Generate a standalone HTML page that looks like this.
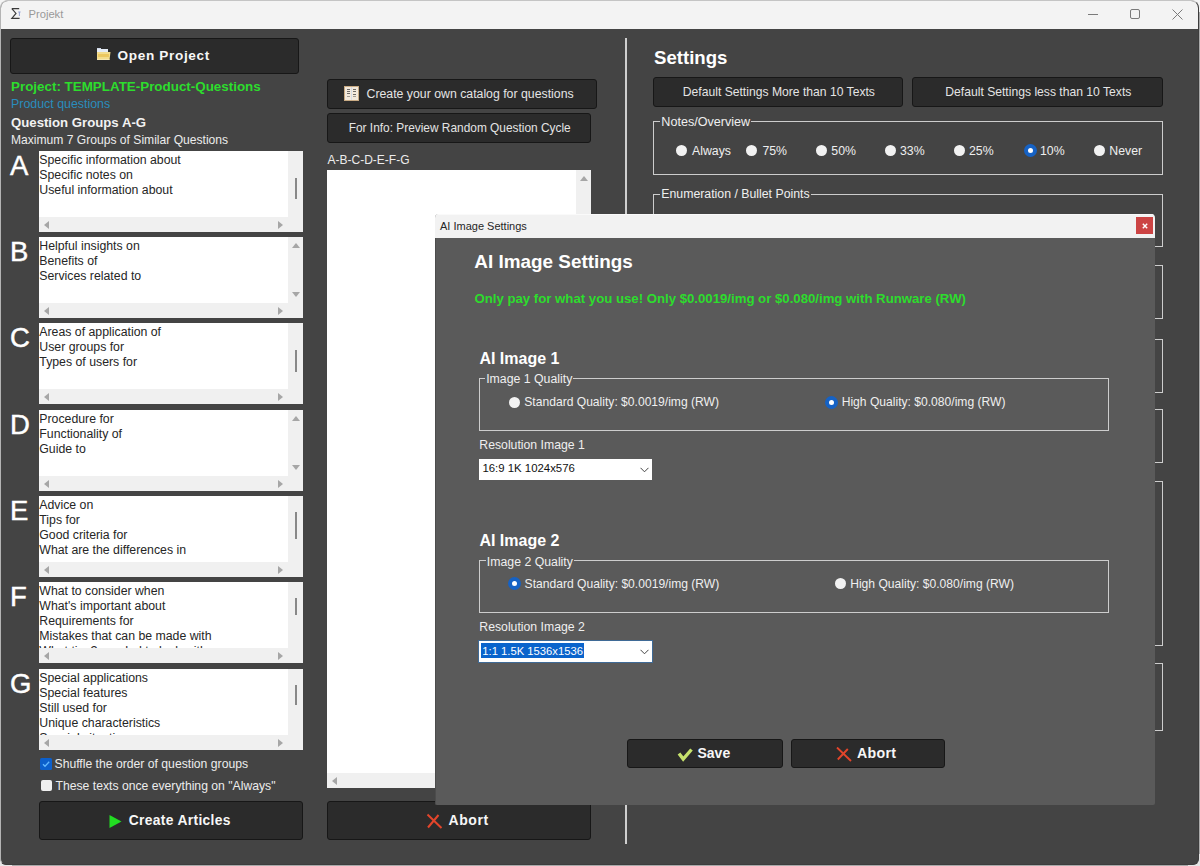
<!DOCTYPE html>
<html><head><meta charset="utf-8"><title>Projekt</title>
<style>
*{margin:0;padding:0;box-sizing:border-box}
html,body{width:1200px;height:866px;overflow:hidden;background:#aaaaaa;font-family:"Liberation Sans",sans-serif}
.a{position:absolute}
.l{position:absolute;white-space:nowrap}
.btn{position:absolute;background:#2b2b2b;border:1px solid #171717;border-radius:3px}
.gb{position:absolute;border:1px solid #cdcdcd}
.tb{position:absolute;left:39px;width:264px;height:81px;background:#fff;overflow:hidden}
.tb .t{position:absolute;left:0.3px;top:0;width:249px;height:66px;overflow:hidden;font-size:12.3px;line-height:15px;color:#262626;white-space:nowrap;padding-top:1.8px}
.tb .vs{position:absolute;left:249px;top:0;width:15px;height:66px;background:#f0f0f0}
.tb .hs{position:absolute;left:0;top:66px;width:264px;height:15px;background:#f0f0f0}
.big{position:absolute;color:#fff;font-size:26px;line-height:30px;white-space:nowrap}
</style></head><body>

<div class="a" style="left:0px;top:0px;width:12px;height:12px;background:#f4f4f4;"></div>
<div class="a" style="left:1188px;top:0px;width:12px;height:12px;background:#f4f4f4;"></div>
<div class="a" style="left:1188px;top:854px;width:12px;height:12px;background:#e6e6e6;"></div>
<div class="a" style="left:0px;top:854px;width:12px;height:12px;background:#e6e6e6;"></div>
<div class="a" style="left:0;top:0;width:1199px;height:865px;border-radius:8px 8px 6px 6px;background:#444444;border-left:1px solid #b4b4b4;border-top:1px solid #c4c4c4;border-right:1px solid #3d3d3d;border-bottom:1px solid #3d3d3d;overflow:hidden"><div class="a" style="left:0;top:0;width:1198px;height:28px;background:#f3f3f3"></div></div>
<svg class="a" style="left:10px;top:7px" width="12" height="13" viewBox="0 0 12 13"><path d="M1.8 1.6H9.2M1.8 1.6L6 6.4L1.8 11.4H9.6" fill="none" stroke="#3a3a3a" stroke-width="1.15"/><path d="M8.2 5H10.6M9.4 5V9" fill="none" stroke="#8c9ad0" stroke-width="0.9"/></svg>
<div class="l" style="left:28.5px;top:8.18px;font-size:11.2px;line-height:12.88px;color:#999999;">Projekt</div>
<div class="a" style="left:1088px;top:14px;width:10px;height:1px;background:#7a7a7a;"></div>
<div class="a" style="left:1130px;top:9px;width:10px;height:10px;border:1px solid #7a7a7a;border-radius:2px"></div>
<svg class="a" style="left:1172px;top:9px" width="11" height="11" viewBox="0 0 11 11"><path d="M0.5 0.5L10.5 10.5M10.5 0.5L0.5 10.5" stroke="#7a7a7a" stroke-width="1"/></svg>
<div class="btn" style="left:10px;top:38px;width:289px;height:36px"></div>
<svg class="a" style="left:97px;top:48px" width="14" height="13" viewBox="0 0 14 13"><rect x="0" y="0" width="4" height="1" fill="#cfd8e8"/><rect x="0" y="1" width="11" height="3" fill="#e4ebf5"/><path d="M0 4H13.5L12.5 12H0Z" fill="#f3dc8c"/><rect x="1" y="6" width="11" height="3" fill="#e9c255" opacity="0.8"/><rect x="0" y="11" width="12.5" height="1" fill="#f6e7b0"/></svg>
<div class="l" style="left:117.5px;top:48.47px;font-size:13.6px;line-height:15.64px;color:#f7f7f7;font-weight:bold;letter-spacing:0.65px;">Open Project</div>
<div class="l" style="left:11px;top:78.65px;font-size:13.4px;line-height:15.41px;color:#2ddd2d;font-weight:bold;">Project: TEMPLATE-Product-Questions</div>
<div class="l" style="left:11px;top:96.87px;font-size:12.4px;line-height:14.26px;color:#2a8dbd;">Product questions</div>
<div class="l" style="left:11px;top:114.84px;font-size:13.2px;line-height:15.18px;color:#f2f2f2;font-weight:bold;">Question Groups A-G</div>
<div class="l" style="left:11px;top:134.05px;font-size:12.1px;line-height:13.91px;color:#ececec;">Maximum 7 Groups of Similar Questions</div>
<div class="tb" style="top:151px"><div class="t">Specific information about<br>Specific notes on<br>Useful information about</div><div class="vs"></div><div class="hs"></div></div>
<div class="a" style="left:295px;top:178px;width:2px;height:21px;background:#888888;"></div>
<svg class="a" style="left:44px;top:221px" width="5" height="8" viewBox="0 0 5 8"><polygon points="5,0 0,4.0 5,8" fill="#a6a6a6"/></svg>
<svg class="a" style="left:278px;top:221px" width="5" height="8" viewBox="0 0 5 8"><polygon points="0,0 5,4.0 0,8" fill="#a6a6a6"/></svg>
<div class="l" style="left:10px;top:150.46px;font-size:27.5px;line-height:31.62px;color:#ffffff;-webkit-text-stroke:0.45px #fff;">A</div>
<div class="tb" style="top:237px"><div class="t">Helpful insights on<br>Benefits of<br>Services related to</div><div class="vs"></div><div class="hs"></div></div>
<svg class="a" style="left:292px;top:243px" width="8" height="5" viewBox="0 0 8 5"><polygon points="0,5 4.0,0 8,5" fill="#a6a6a6"/></svg>
<svg class="a" style="left:292px;top:292px" width="8" height="5" viewBox="0 0 8 5"><polygon points="0,0 8,0 4.0,5" fill="#a6a6a6"/></svg>
<svg class="a" style="left:44px;top:307px" width="5" height="8" viewBox="0 0 5 8"><polygon points="5,0 0,4.0 5,8" fill="#a6a6a6"/></svg>
<svg class="a" style="left:278px;top:307px" width="5" height="8" viewBox="0 0 5 8"><polygon points="0,0 5,4.0 0,8" fill="#a6a6a6"/></svg>
<div class="l" style="left:10px;top:236.46px;font-size:27.5px;line-height:31.62px;color:#ffffff;-webkit-text-stroke:0.45px #fff;">B</div>
<div class="tb" style="top:323px"><div class="t">Areas of application of<br>User groups for<br>Types of users for</div><div class="vs"></div><div class="hs"></div></div>
<div class="a" style="left:295px;top:350px;width:2px;height:22px;background:#888888;"></div>
<svg class="a" style="left:44px;top:393px" width="5" height="8" viewBox="0 0 5 8"><polygon points="5,0 0,4.0 5,8" fill="#a6a6a6"/></svg>
<svg class="a" style="left:278px;top:393px" width="5" height="8" viewBox="0 0 5 8"><polygon points="0,0 5,4.0 0,8" fill="#a6a6a6"/></svg>
<div class="l" style="left:10px;top:322.46px;font-size:27.5px;line-height:31.62px;color:#ffffff;-webkit-text-stroke:0.45px #fff;">C</div>
<div class="tb" style="top:410px"><div class="t">Procedure for<br>Functionality of<br>Guide to</div><div class="vs"></div><div class="hs"></div></div>
<svg class="a" style="left:292px;top:416px" width="8" height="5" viewBox="0 0 8 5"><polygon points="0,5 4.0,0 8,5" fill="#a6a6a6"/></svg>
<svg class="a" style="left:292px;top:465px" width="8" height="5" viewBox="0 0 8 5"><polygon points="0,0 8,0 4.0,5" fill="#a6a6a6"/></svg>
<svg class="a" style="left:44px;top:480px" width="5" height="8" viewBox="0 0 5 8"><polygon points="5,0 0,4.0 5,8" fill="#a6a6a6"/></svg>
<svg class="a" style="left:278px;top:480px" width="5" height="8" viewBox="0 0 5 8"><polygon points="0,0 5,4.0 0,8" fill="#a6a6a6"/></svg>
<div class="l" style="left:10px;top:409.46px;font-size:27.5px;line-height:31.62px;color:#ffffff;-webkit-text-stroke:0.45px #fff;">D</div>
<div class="tb" style="top:496px"><div class="t">Advice on<br>Tips for<br>Good criteria for<br>What are the differences in</div><div class="vs"></div><div class="hs"></div></div>
<div class="a" style="left:295px;top:512px;width:2px;height:27px;background:#888888;"></div>
<svg class="a" style="left:44px;top:566px" width="5" height="8" viewBox="0 0 5 8"><polygon points="5,0 0,4.0 5,8" fill="#a6a6a6"/></svg>
<svg class="a" style="left:278px;top:566px" width="5" height="8" viewBox="0 0 5 8"><polygon points="0,0 5,4.0 0,8" fill="#a6a6a6"/></svg>
<div class="l" style="left:10px;top:495.46px;font-size:27.5px;line-height:31.62px;color:#ffffff;-webkit-text-stroke:0.45px #fff;">E</div>
<div class="tb" style="top:582px"><div class="t">What to consider when<br>What's important about<br>Requirements for<br>Mistakes that can be made with<br>What tips? needed to look with</div><div class="vs"></div><div class="hs"></div></div>
<div class="a" style="left:295px;top:598px;width:2px;height:17px;background:#888888;"></div>
<svg class="a" style="left:44px;top:652px" width="5" height="8" viewBox="0 0 5 8"><polygon points="5,0 0,4.0 5,8" fill="#a6a6a6"/></svg>
<svg class="a" style="left:278px;top:652px" width="5" height="8" viewBox="0 0 5 8"><polygon points="0,0 5,4.0 0,8" fill="#a6a6a6"/></svg>
<div class="l" style="left:10px;top:581.46px;font-size:27.5px;line-height:31.62px;color:#ffffff;-webkit-text-stroke:0.45px #fff;">F</div>
<div class="tb" style="top:669px"><div class="t">Special applications<br>Special features<br>Still used for<br>Unique characteristics<br>Special situations</div><div class="vs"></div><div class="hs"></div></div>
<div class="a" style="left:295px;top:685px;width:2px;height:20px;background:#888888;"></div>
<svg class="a" style="left:44px;top:739px" width="5" height="8" viewBox="0 0 5 8"><polygon points="5,0 0,4.0 5,8" fill="#a6a6a6"/></svg>
<svg class="a" style="left:278px;top:739px" width="5" height="8" viewBox="0 0 5 8"><polygon points="0,0 5,4.0 0,8" fill="#a6a6a6"/></svg>
<div class="l" style="left:10px;top:668.46px;font-size:27.5px;line-height:31.62px;color:#ffffff;-webkit-text-stroke:0.45px #fff;">G</div>
<div class="a" style="left:40px;top:758px;width:12px;height:11.5px;background:#0c5fcb;border-radius:1.5px"></div>
<svg class="a" style="left:40px;top:758px" width="12" height="12" viewBox="0 0 12 12"><path d="M3 6.2L5 8.2L9.2 3.8" fill="none" stroke="#62b8ff" stroke-width="1.3"/></svg>
<div class="l" style="left:54.5px;top:757.46px;font-size:12.2px;line-height:14.03px;color:#ececec;">Shuffle the order of question groups</div>
<div class="a" style="left:41px;top:779.5px;width:11px;height:11px;background:#f0f0f0;border-radius:2px"></div>
<div class="l" style="left:55.5px;top:778.76px;font-size:12.2px;line-height:14.03px;color:#ececec;">These texts once everything on &quot;Always&quot;</div>
<div class="btn" style="left:39px;top:801px;width:264px;height:39px"></div>
<svg class="a" style="left:109px;top:815px" width="13" height="13" viewBox="0 0 13 13"><polygon points="0.5,0 12.5,6.5 0.5,13" fill="#22dd22"/></svg>
<div class="l" style="left:128.7px;top:812.98px;font-size:13.8px;line-height:15.87px;color:#f7f7f7;font-weight:bold;letter-spacing:0.35px;">Create Articles</div>
<div class="btn" style="left:327px;top:79px;width:270px;height:30px"></div>
<svg class="a" style="left:344px;top:86px" width="15" height="15" viewBox="0 0 15 15"><rect x="0" y="0" width="15" height="15" fill="#c9ab84"/><rect x="1" y="1" width="13" height="13" fill="#f3e9dc"/><rect x="7" y="1" width="1" height="13" fill="#d6dde8"/><g fill="#6d6a66"><rect x="3" y="3" width="3" height="1"/><rect x="3" y="5" width="3" height="1"/><rect x="3" y="7" width="3" height="1"/><rect x="9" y="3" width="3" height="1"/><rect x="9" y="5" width="3" height="1"/><rect x="9" y="8" width="3" height="1"/><rect x="3" y="10" width="3" height="1" opacity="0.6"/><rect x="9" y="10" width="3" height="1" opacity="0.6"/></g></svg>
<div class="l" style="left:366.5px;top:87.37px;font-size:12.3px;line-height:14.14px;color:#e4e4e4;">Create your own catalog for questions</div>
<div class="btn" style="left:327px;top:113px;width:264px;height:30px"></div>
<div class="l" style="left:348.7px;top:122.34px;font-size:11.9px;line-height:13.68px;color:#e4e4e4;">For Info: Preview Random Question Cycle</div>
<div class="l" style="left:327.5px;top:153.94px;font-size:12px;line-height:13.8px;color:#ececec;">A-B-C-D-E-F-G</div>
<div class="a" style="left:327px;top:170px;width:264px;height:618px;background:#ffffff;"></div>
<div class="a" style="left:576px;top:170px;width:15px;height:603px;background:#f0f0f0;"></div>
<div class="a" style="left:327px;top:773px;width:264px;height:15px;background:#f0f0f0;"></div>
<svg class="a" style="left:580px;top:176px" width="8" height="5" viewBox="0 0 8 5"><polygon points="0,5 4.0,0 8,5" fill="#a6a6a6"/></svg>
<svg class="a" style="left:332px;top:777px" width="5" height="8" viewBox="0 0 5 8"><polygon points="5,0 0,4.0 5,8" fill="#a6a6a6"/></svg>
<div class="btn" style="left:327px;top:801px;width:264px;height:39px"></div>
<svg class="a" style="left:426px;top:813px" width="17" height="16" viewBox="0 0 17 16"><path d="M1.5 1.5L15.5 15M12.5 2L2 14.5" fill="none" stroke="#e2452b" stroke-width="2"/></svg>
<div class="l" style="left:448.5px;top:812.10px;font-size:14px;line-height:16.1px;color:#f7f7f7;font-weight:bold;letter-spacing:0.6px;">Abort</div>
<div class="a" style="left:625px;top:38px;width:2px;height:806px;background:#cfcfcf;"></div>
<div class="l" style="left:654px;top:46.86px;font-size:18.6px;line-height:21.39px;color:#ffffff;font-weight:bold;">Settings</div>
<div class="btn" style="left:653px;top:77px;width:250px;height:30px"></div>
<div class="l" style="left:682.8px;top:86.11px;font-size:12.15px;line-height:13.97px;color:#e4e4e4;">Default Settings More than 10 Texts</div>
<div class="btn" style="left:912px;top:77px;width:251px;height:30px"></div>
<div class="l" style="left:945.3px;top:86.11px;font-size:12.15px;line-height:13.97px;color:#e4e4e4;">Default Settings less than 10 Texts</div>
<div class="gb" style="left:653px;top:121px;width:510px;height:54px"></div>
<div class="l" style="left:660.3px;top:114.69px;font-size:12.6px;line-height:14.49px;color:#efefef;background:#444444;padding:0 1px;">Notes/Overview</div>
<div class="a" style="left:676.0px;top:144.5px;width:11px;height:11px;border-radius:50%;background:#f2f2f2"></div>
<div class="l" style="left:692px;top:144.27px;font-size:12.3px;line-height:14.14px;color:#efefef;">Always</div>
<div class="a" style="left:746.0px;top:144.5px;width:11px;height:11px;border-radius:50%;background:#f2f2f2"></div>
<div class="l" style="left:762.4px;top:144.27px;font-size:12.3px;line-height:14.14px;color:#efefef;">75%</div>
<div class="a" style="left:815.8px;top:144.5px;width:11px;height:11px;border-radius:50%;background:#f2f2f2"></div>
<div class="l" style="left:831.3px;top:144.27px;font-size:12.3px;line-height:14.14px;color:#efefef;">50%</div>
<div class="a" style="left:884.5px;top:144.5px;width:11px;height:11px;border-radius:50%;background:#f2f2f2"></div>
<div class="l" style="left:900px;top:144.27px;font-size:12.3px;line-height:14.14px;color:#efefef;">33%</div>
<div class="a" style="left:954.0px;top:144.5px;width:11px;height:11px;border-radius:50%;background:#f2f2f2"></div>
<div class="l" style="left:969px;top:144.27px;font-size:12.3px;line-height:14.14px;color:#efefef;">25%</div>
<div class="a" style="left:1023.5px;top:143.5px;width:13px;height:13px;border-radius:50%;background:#1662c4"></div>
<div class="a" style="left:1027.5px;top:147.5px;width:5px;height:5px;border-radius:50%;background:#fff"></div>
<div class="l" style="left:1040px;top:144.27px;font-size:12.3px;line-height:14.14px;color:#efefef;">10%</div>
<div class="a" style="left:1093.8px;top:144.5px;width:11px;height:11px;border-radius:50%;background:#f2f2f2"></div>
<div class="l" style="left:1109.3px;top:144.27px;font-size:12.3px;line-height:14.14px;color:#efefef;">Never</div>
<div class="gb" style="left:653px;top:194px;width:510px;height:53px"></div>
<div class="l" style="left:660.3px;top:186.67px;font-size:12.3px;line-height:14.14px;color:#efefef;background:#444444;padding:0 1px;">Enumeration / Bullet Points</div>
<div class="gb" style="left:653px;top:265px;width:510px;height:54px"></div>
<div class="gb" style="left:653px;top:339px;width:510px;height:54px"></div>
<div class="gb" style="left:653px;top:409px;width:510px;height:54px"></div>
<div class="gb" style="left:653px;top:481px;width:510px;height:165px"></div>
<div class="gb" style="left:653px;top:663px;width:510px;height:68px"></div>
<div class="a" style="left:435px;top:214px;width:720px;height:591px;background:#5a5a5a;border-radius:4px 4px 2px 2px;overflow:hidden"><div class="a" style="left:0;top:24px;width:1px;height:567px;background:#4c4c4c"></div><div class="a" style="left:0;top:0;width:720px;height:24px;background:#f2f2f2;border-top:1px solid #fafafa"></div></div>
<div class="l" style="left:440px;top:220.16px;font-size:11px;line-height:12.65px;color:#262626;">AI Image Settings</div>
<div class="a" style="left:1136px;top:217px;width:17px;height:17px;background:#cc4444"></div>
<svg class="a" style="left:1141.5px;top:222.5px" width="6" height="6" viewBox="0 0 6 6"><path d="M0.8 0.8L5.2 5.2M5.2 0.8L0.8 5.2" stroke="#fff" stroke-width="1.4"/></svg>
<div class="l" style="left:474.3px;top:251.19px;font-size:18.9px;line-height:21.73px;color:#ffffff;font-weight:bold;">AI Image Settings</div>
<div class="l" style="left:474.5px;top:291.24px;font-size:13.2px;line-height:15.18px;color:#2ddd2d;font-weight:bold;">Only pay for what you use! Only $0.0019/img or $0.080/img with Runware (RW)</div>
<div class="l" style="left:479.4px;top:350.06px;font-size:16px;line-height:18.4px;color:#ffffff;font-weight:bold;letter-spacing:0px;">AI Image 1</div>
<div class="gb" style="left:479px;top:378px;width:630px;height:53px"></div>
<div class="l" style="left:485.2px;top:372.07px;font-size:12.3px;line-height:14.14px;color:#efefef;background:#5a5a5a;padding:0 1px;">Image 1 Quality</div>
<div class="a" style="left:509.0px;top:396.5px;width:11px;height:11px;border-radius:50%;background:#f2f2f2"></div>
<div class="l" style="left:524.3px;top:396.15px;font-size:12.1px;line-height:13.91px;color:#efefef;">Standard Quality: $0.0019/img (RW)</div>
<div class="a" style="left:824.5px;top:395.5px;width:13px;height:13px;border-radius:50%;background:#1662c4"></div>
<div class="a" style="left:828.5px;top:399.5px;width:5px;height:5px;border-radius:50%;background:#fff"></div>
<div class="l" style="left:841.7px;top:396.15px;font-size:12.1px;line-height:13.91px;color:#efefef;">High Quality: $0.080/img (RW)</div>
<div class="l" style="left:479.3px;top:437.61px;font-size:12.25px;line-height:14.09px;color:#efefef;">Resolution Image 1</div>
<div class="a" style="left:479px;top:459px;width:173px;height:21px;background:#ffffff;"></div>
<div class="l" style="left:482.4px;top:462.39px;font-size:11.4px;line-height:13.11px;color:#111111;">16:9 1K 1024x576</div>
<svg class="a" style="left:640px;top:467px" width="9" height="6" viewBox="0 0 9 6"><path d="M0.5 0.8L4.5 4.8L8.5 0.8" fill="none" stroke="#444" stroke-width="1"/></svg>
<div class="l" style="left:479.4px;top:532.26px;font-size:16px;line-height:18.4px;color:#ffffff;font-weight:bold;letter-spacing:0px;">AI Image 2</div>
<div class="gb" style="left:479px;top:560px;width:630px;height:53px"></div>
<div class="l" style="left:485.8px;top:554.57px;font-size:12.3px;line-height:14.14px;color:#efefef;background:#5a5a5a;padding:0 1px;">Image 2 Quality</div>
<div class="a" style="left:507.70000000000005px;top:577.2px;width:13px;height:13px;border-radius:50%;background:#1662c4"></div>
<div class="a" style="left:511.70000000000005px;top:581.2px;width:5px;height:5px;border-radius:50%;background:#fff"></div>
<div class="l" style="left:524.6px;top:578.45px;font-size:12.1px;line-height:13.91px;color:#efefef;">Standard Quality: $0.0019/img (RW)</div>
<div class="a" style="left:835.1px;top:578.2px;width:11px;height:11px;border-radius:50%;background:#f2f2f2"></div>
<div class="l" style="left:850.2px;top:578.45px;font-size:12.1px;line-height:13.91px;color:#efefef;">High Quality: $0.080/img (RW)</div>
<div class="l" style="left:479.3px;top:619.51px;font-size:12.25px;line-height:14.09px;color:#efefef;">Resolution Image 2</div>
<div class="a" style="left:479px;top:641px;width:173px;height:21px;background:#ffffff;box-shadow:0 0 0 1px #3f6a96"></div>
<div class="a" style="left:481px;top:643px;width:103px;height:15px;background:#0a64cc;"></div>
<div class="l" style="left:482.3px;top:644.93px;font-size:11.25px;line-height:12.94px;color:#ffffff;">1:1 1.5K 1536x1536</div>
<svg class="a" style="left:640px;top:649px" width="9" height="6" viewBox="0 0 9 6"><path d="M0.5 0.8L4.5 4.8L8.5 0.8" fill="none" stroke="#444" stroke-width="1"/></svg>
<div class="btn" style="left:627px;top:739px;width:156px;height:29px"></div>
<svg class="a" style="left:677px;top:747px" width="16" height="15" viewBox="0 0 16 15"><path d="M2 6.5L6.2 12L14.5 2.5" fill="none" stroke="#c6e26c" stroke-width="3.4" stroke-linejoin="miter"/></svg>
<div class="l" style="left:697.5px;top:745.10px;font-size:14px;line-height:16.1px;color:#f7f7f7;font-weight:bold;">Save</div>
<div class="btn" style="left:791px;top:739px;width:154px;height:29px"></div>
<svg class="a" style="left:836px;top:747px" width="16" height="15" viewBox="0 0 16 15"><path d="M1 0.5L15 14M11.8 2L1.8 12.5" fill="none" stroke="#e2452b" stroke-width="1.9"/></svg>
<div class="l" style="left:857px;top:744.91px;font-size:14.2px;line-height:16.33px;color:#f7f7f7;font-weight:bold;letter-spacing:0.3px;">Abort</div>
</body></html>
